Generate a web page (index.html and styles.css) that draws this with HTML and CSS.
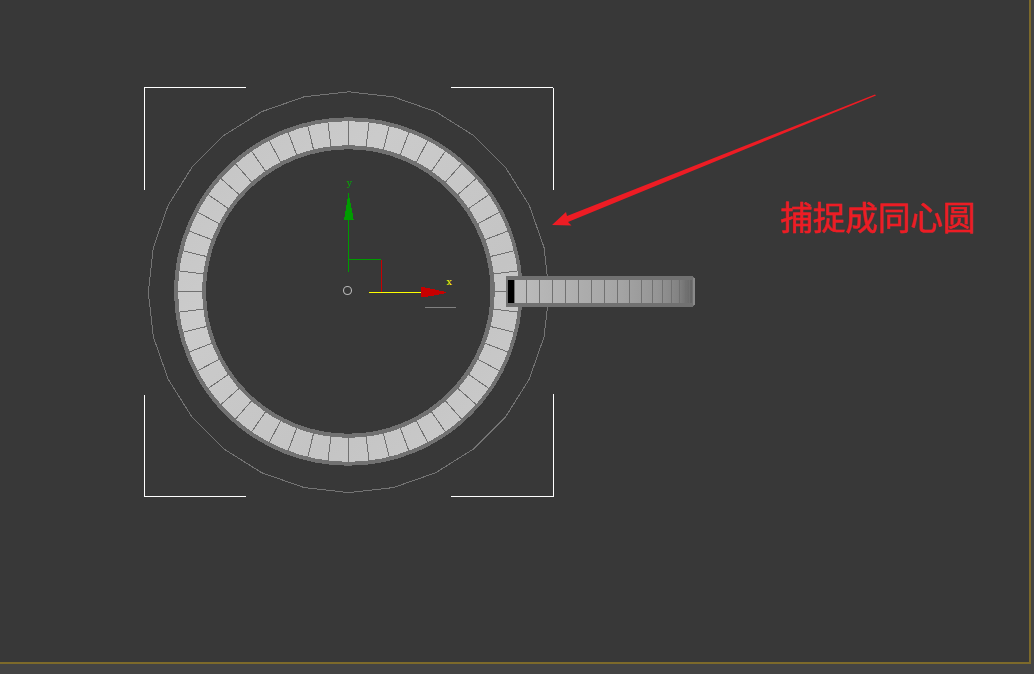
FILE: index.html
```html
<!DOCTYPE html>
<html lang="zh-CN">
<head>
<meta charset="utf-8">
<title>捕捉成同心圆</title>
<link rel="stylesheet" href="styles.css">
</head>
<body>
<main class="viewport">
<svg class="scene" width="1029" height="662" viewBox="0 0 1029 662">
  <defs>
    <linearGradient id="ring" x1="0" y1="0" x2="1" y2="1">
      <stop offset="0" stop-color="#c4c4c4"/><stop offset=".3" stop-color="#cbcbcb"/><stop offset=".7" stop-color="#c4c4c4"/><stop offset="1" stop-color="#cbcbcb"/>
    </linearGradient>
    <linearGradient id="side">
      <stop offset="0" stop-color="#bcbcbc"/><stop offset=".3" stop-color="#b0b0b0"/><stop offset=".6" stop-color="#a4a4a4"/><stop offset=".8" stop-color="#959595"/><stop offset=".92" stop-color="#838383"/><stop offset="1" stop-color="#656565"/>
    </linearGradient>
  </defs>

  <!-- outer 28-sided guide -->
  <polygon id="guide" class="guide"/>

  <!-- selected ring, front view -->
  <g class="crisp">
    <circle class="ring-edge" cx="348.3" cy="291.5" r="158.2"/>
    <circle class="ring-face" cx="348.5" cy="291.5" r="158.3"/>
    <path id="spokes" class="spokes"/>
  </g>

  <!-- second ring, seen from the side -->
  <g class="crisp">
    <path fill="#717171" d="M506 276H692L695 279V304L692 307H506Z"/>
    <path fill="url(#side)" d="M515 280H692V303H515Z"/>
    <path fill="#000" d="M508 280H514V303H508Z"/>
    <path fill="#8a8a8a" d="M693 278H695V305H693Z"/>
    <path class="divider" d="M526.5 280V303M539.5 280V303M552.5 280V303M565.5 280V303M578.5 280V303M591.5 280V303M604.5 280V303M617.5 280V303M629.5 280V303M641.5 280V303M652.5 280V303M662.5 280V303M671.5 280V303M679.5 280V303M685.5 280V303M689.5 280V303"/>
  </g>

  <path class="bracket" d="M246 87.5H144.5V190M451 87.5H553M553.5 88V190M144.5 395V496.5H246M451 496.5H553.5V394"/>

  <!-- move gizmo -->
  <g class="crisp gizmo">
    <path stroke="#c80000" d="M381.5 260V292"/>
    <path stroke="#009b00" d="M348.5 219V272M348 259.5H381"/>
    <path stroke="#ffff00" d="M369 292.5H421"/>
    <path fill="#009b00" d="M348.5 193L353.8 220H344Z"/>
    <path fill="#c80000" d="M421 287L428 288L446 292V293L431 296L421 297.5Z"/>
    <path stroke="#808080" d="M425 307.5H456"/>
  </g>
  <circle class="pivot" cx="347.5" cy="290.5" r="4"/>
  <text class="axis axis-y" x="346.8" y="186">y</text>
  <text class="axis axis-x" x="446.6" y="285">x</text>

  <path fill="#ed1c24" d="M552 225L566 212L567 216L875 94.5L876 95.5L568 222L571.5 225.5Z"/>
  <text class="note" x="780" y="229.5">捕捉成同心圆</text>
</svg>
</main>
<script src="scene.js"></script>
</body>
</html>
```
FILE: styles.css
```css
body { margin: 0; background: #444444; }
.viewport {
  box-sizing: border-box;
  width: 1031px;
  height: 664px;
  background: #383838;
  border-right: 2px solid #7d6a2b;
  border-bottom: 2px solid #7d6a2b;
}
.scene { display: block; }
.crisp { shape-rendering: crispEdges; }
.guide { fill: none; stroke: #747474; shape-rendering: crispEdges; }
.ring-edge { fill: none; stroke: #717171; stroke-width: 32; }
.ring-face { fill: none; stroke: url(#ring); stroke-width: 24; }
.spokes, .divider { fill: none; stroke: #717171; }
.bracket { fill: none; stroke: #ffffff; shape-rendering: crispEdges; }
.pivot { fill: none; stroke: #b8b8b8; stroke-width: 1.1; }
.axis { font-family: "DejaVu Serif", serif; font-size: 9.5px; }
.axis-y { fill: #00a800; }
.axis-x { fill: #ffff00; }
.note {
  font-family: "Noto Sans CJK SC", sans-serif;
  font-size: 32.5px;
  font-weight: 400;
  fill: #ed1c24;
  stroke: #ed1c24;
  stroke-width: .5;
}
```
FILE: scene.js
```js
const polar = (cx, cy, r, a) =>
  (cx + r * Math.sin(a)).toFixed(2) + "," + (cy - r * Math.cos(a)).toFixed(2);

const corners = [];
for (let i = 0; i < 28; i++) corners.push(polar(348.7, 292.2, 200.4, i * Math.PI / 14));
document.getElementById("guide").setAttribute("points", corners.join(" "));

let spokes = "";
for (let i = 0; i < 52; i++) {
  const a = i * Math.PI / 26;
  spokes += "M" + polar(348.5, 291.5, 146, a) + "L" + polar(348.5, 291.5, 171, a);
}
document.getElementById("spokes").setAttribute("d", spokes);
```
